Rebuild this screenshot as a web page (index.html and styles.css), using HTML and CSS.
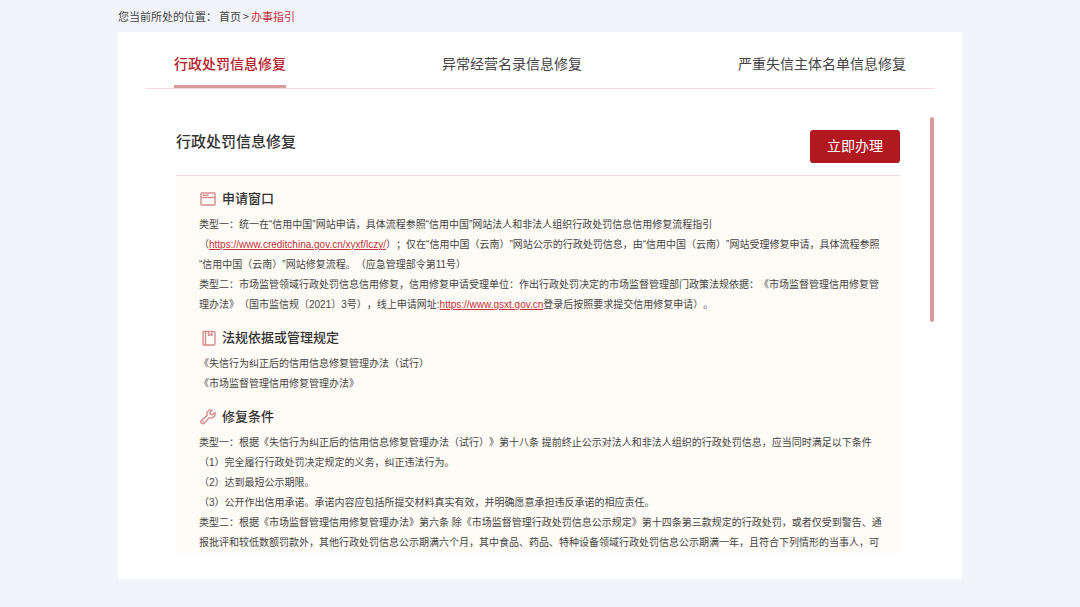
FILE: index.html
```html
<!DOCTYPE html>
<html lang="zh-CN">
<head>
<meta charset="utf-8">
<title>办事指引</title>
<link rel="stylesheet" href="styles.css">
</head>
<body>
<div class="page">
  <nav class="crumbs" aria-label="当前位置">
    <span class="crumbs-label">您当前所处的位置：</span>
    <a href="#">首页</a>
    <span>&gt;</span>
    <a class="current" href="#">办事指引</a>
  </nav>
  <main class="card">
    <nav class="tabs">
      <a class="tab active" href="#">行政处罚信息修复</a>
      <a class="tab" href="#">异常经营名录信息修复</a>
      <a class="tab" href="#">严重失信主体名单信息修复</a>
    </nav>
    <div class="viewport">
      <article class="guide">
        <header class="guide-head">
          <h1>行政处罚信息修复</h1>
          <button class="apply" type="button">立即办理</button>
        </header>
        <div class="guide-body">
          <section>
            <h2>
              <svg class="icon" viewBox="0 0 18 16" aria-hidden="true"><rect x="2" y="2" width="14" height="12" rx=".6"/><path d="M2 6.500h14M4 4.300h1M6 4.300h1M8 4.300h1"/></svg>
              申请窗口
            </h2>
            <p>类型一：统一在“信用中国”网站申请，具体流程参照“信用中国”网站法人和非法人组织行政处罚信息信用修复流程指引<br>（<a href="#">https://www.creditchina.gov.cn/xyxf/lczy/</a>）；仅在“信用中国（云南）”网站公示的行政处罚信息，由“信用中国（云南）”网站受理修复申请，具体流程参照<br>“信用中国（云南）”网站修复流程。（应急管理部令第11号）</p>
            <p>类型二：市场监管领域行政处罚信息信用修复，信用修复申请受理单位：作出行政处罚决定的市场监督管理部门政策法规依据：《市场监督管理信用修复管<br>理办法》（国市监信规〔2021〕3号），线上申请网址:<a href="#">https://www.gsxt.gov.cn</a>登录后按照要求提交信用修复申请）。</p>
          </section>
          <section>
            <h2>
              <svg class="icon" viewBox="0 0 18 16" aria-hidden="true"><rect x="4" y="1.500" width="12" height="13.500" rx="1"/><path d="M6.500 1.500v13.500M9.500 1.500v4l1.700-1.200 1.700 1.200v-4"/></svg>
              法规依据或管理规定
            </h2>
            <p>《失信行为纠正后的信用信息修复管理办法（试行）</p>
            <p>《市场监督管理信用修复管理办法》</p>
          </section>
          <section>
            <h2>
              <svg class="icon" viewBox="0 0 18 16" aria-hidden="true"><path d="M13.100 1.100C10.700.2 7.800 2 7.900 4.600c0 .8.1 1.200.3 1.800L2.700 11.100c-1 .9-1 2.200-.3 3s2.200.9 3-.1l4.800-5.400c2.400 1.100 5.700-.6 6-3.200.1-.7 0-1.300-.3-1.900l-2.600 2.300-1.900-.4-.5-1.900z"/><path d="M4.200 12.400h.1"/></svg>
              修复条件
            </h2>
            <p>类型一：根据《失信行为纠正后的信用信息修复管理办法（试行）》第十八条 提前终止公示对法人和非法人组织的行政处罚信息，应当同时满足以下条件</p>
            <p>（1）完全履行行政处罚决定规定的义务，纠正违法行为。</p>
            <p>（2）达到最短公示期限。</p>
            <p>（3）公开作出信用承诺。承诺内容应包括所提交材料真实有效，并明确愿意承担违反承诺的相应责任。</p>
            <p>类型二：根据《市场监督管理信用修复管理办法》第六条 除《市场监督管理行政处罚信息公示规定》第十四条第三款规定的行政处罚，或者仅受到警告、通<br>报批评和较低数额罚款外，其他行政处罚信息公示期满六个月，其中食品、药品、特种设备领域行政处罚信息公示期满一年，且符合下列情形的当事人，可</p>
          </section>
        </div>
      </article>
      <div class="scrollbar" aria-hidden="true"><div class="thumb"></div></div>
    </div>
  </main>
</div>
</body>
</html>
```
FILE: styles.css
```css
* {
  box-sizing: border-box;
}

body {
  margin: 0;
  background: #f3f4f9;
  color: #444;
  font-family: "Liberation Sans", "Noto Sans CJK SC", sans-serif;
  text-spacing-trim: space-all;
}

.page {
  padding: 0 118px 28px;
}

.crumbs {
  display: flex;
  align-items: center;
  gap: 2px;
  height: 32px;
  font-family: "Noto Sans CJK SC", sans-serif;
  font-size: 11px;
}

.crumbs a {
  color: inherit;
  text-decoration: none;
}

.crumbs .current {
  color: #c2303a;
}

.card {
  padding: 0 28px 26px;
  background: #fff;
}

.tabs {
  display: flex;
  justify-content: space-between;
  padding: 0 28px;
  border-bottom: 1px solid #f3d9da;
}

.tab {
  height: 56px;
  padding-top: 22px;
  color: #444;
  font-size: 14px;
  line-height: 21px;
  text-decoration: none;
}

.tab.active {
  border-bottom: 3px solid #d99a9c;
  color: #b5202a;
  font-weight: 500;
}

.viewport {
  display: flex;
  justify-content: space-between;
  gap: 30px;
  padding: 28px 0 0 30px;
}

.guide {
  flex: 1;
  min-width: 0;
}

.guide-head {
  display: flex;
  justify-content: space-between;
  align-items: flex-start;
  padding: 13px 0 12px;
  border-bottom: 1px solid #f3d9da;
}

h1 {
  margin: 0;
  color: #333;
  font-size: 15px;
  font-weight: 500;
  line-height: 24px;
}

.apply {
  padding: 6px 17px;
  border: 0;
  border-radius: 3px;
  background: #b2181f;
  color: #fff;
  font-family: inherit;
  font-size: 14px;
  line-height: 21px;
}

.guide-body {
  padding: 13px 0 0 23px;
  background: #fffbf7;
}

section + section {
  padding-top: 13px;
}

h2 {
  display: flex;
  align-items: center;
  gap: 5px;
  margin: 0 0 6px;
  color: #333;
  font-size: 13px;
  font-weight: 500;
  line-height: 20px;
}

.icon {
  width: 18px;
  height: 16px;
  fill: none;
  stroke: #d58f92;
  stroke-width: 1.4;
  stroke-linecap: round;
  stroke-linejoin: round;
}

p {
  margin: 0;
  font-size: 10px;
  line-height: 20px;
}

p a {
  color: #c2303a;
}

.scrollbar {
  width: 4px;
}

.thumb {
  height: 47%;
  border-radius: 2px;
  background: #d99a9c;
}
```
